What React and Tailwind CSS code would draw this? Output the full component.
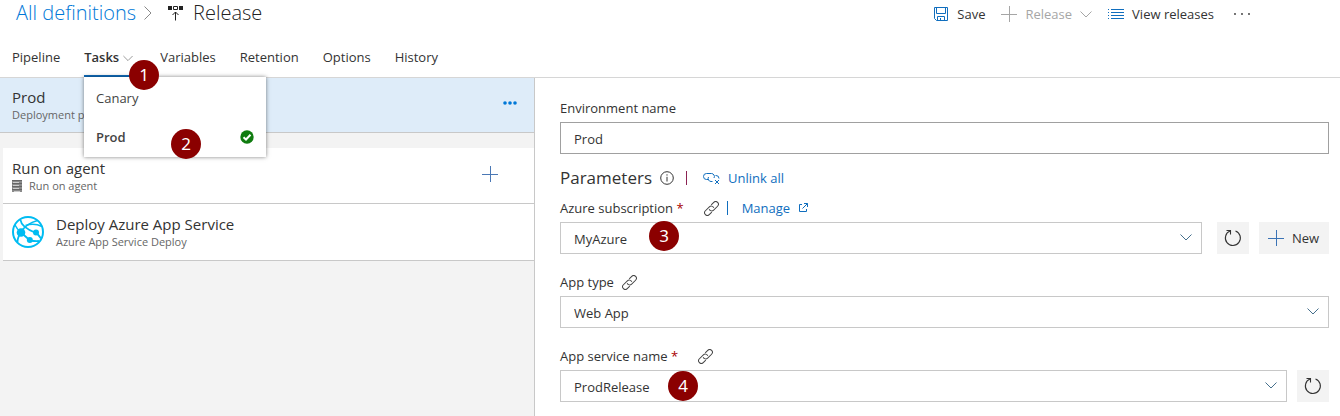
import React from "react";

const stroke = { fill: "none", stroke: "currentColor" };

function Chevron({ className = "" }) {
  return (
    <svg width="12" height="7" viewBox="0 0 12 7" className={className} {...stroke} aria-hidden="true">
      <path d="M0.5 0.5 6 6 11.5 0.5" />
    </svg>
  );
}

function Plus({ className = "" }) {
  return (
    <svg width="16" height="16" viewBox="0 0 16 16" className={className} {...stroke} aria-hidden="true">
      <path d="M8.5 0V16M0 8.5H16" />
    </svg>
  );
}

function LinkIcon() {
  return (
    <svg width="15" height="15" viewBox="0 0 15 15" className="shrink-0 text-[#444]" {...stroke} aria-hidden="true">
      <g transform="rotate(-45 7.5 7.5)">
        <path d="M5.200 10.200H1.600a2.700 2.700 0 0 1 0-5.400h5.600a2.700 2.700 0 0 1 2.400 3.800" />
        <path d="M9.800 4.800H13.400a2.700 2.700 0 0 1 0 5.400H7.800a2.700 2.700 0 0 1-2.400-3.800" />
      </g>
    </svg>
  );
}

function UnlinkIcon() {
  return (
    <svg width="17" height="14" viewBox="0 0 17 14" className="shrink-0" {...stroke} aria-hidden="true">
      <path d="M5.500 8.500H3.500a3 3 0 0 1 0-6h5a3 3 0 0 1 2.500 4.500" />
      <path d="M9.500 10.500H8a3 3 0 0 1-2.500-4.500M12.500 4.500h0.500a3 3 0 0 1 3 3" />
      <path d="M12 9l4 4M16 9l-4 4" />
    </svg>
  );
}

function InfoIcon() {
  return (
    <svg width="14" height="14" viewBox="0 0 14 14" className="text-[#333]" {...stroke} aria-hidden="true">
      <circle cx="7" cy="7" r="6.300" />
      <path d="M7 5.800V10.500M7 3.300V4.600" />
    </svg>
  );
}

function ExternalIcon() {
  return (
    <svg width="10" height="10" viewBox="0 0 10 10" {...stroke} aria-hidden="true">
      <path d="M4 1.500H1.500v7h7V6M6 0.500h3.500V4M9.500 0.500L4.500 5.500" />
    </svg>
  );
}

function RefreshIcon() {
  return (
    <svg width="18" height="18" viewBox="0 0 18 18" className="text-[#333]" {...stroke} aria-hidden="true">
      <path d="M11.500 1.900A7.500 7.500 0 1 1 6 2" strokeWidth="1.100" />
      <path d="M2.500 1.500H6.500V5.500" strokeWidth="1.100" />
    </svg>
  );
}

function SaveIcon() {
  return (
    <svg width="14" height="14" viewBox="0 0 14 14" className="text-[#106ebe]" {...stroke} aria-hidden="true">
      <path d="M0.500 0.500H13.500V13.500H2.500L0.500 11.500Z" />
      <path d="M2.500 0.500V6.500H11.500V0.500M3.500 13.500V9.500H10.500V13.500M6.500 11V13.500" />
    </svg>
  );
}

function ListIcon() {
  return (
    <svg width="16" height="12" viewBox="0 0 16 12" className="text-[#106ebe]" {...stroke} aria-hidden="true">
      <path d="M3 1.500H16M3 4.500H16M3 7.500H16M3 10.500H16" />
      <path d="M0 1.500H1M0 4.500H1M0 7.500H1M0 10.500H1" />
    </svg>
  );
}

function ReleaseIcon() {
  return (
    <svg width="15" height="15" viewBox="0 0 15 15" className="text-[#222]" aria-hidden="true">
      <path fill="currentColor" d="M0 0h4v4H0zM11 0h4v4h-4z" />
      <path {...stroke} d="M5.500 0.500h4v3h-4zM7.500 6V14.500M4.500 9l3-3 3 3" />
    </svg>
  );
}

function ServerIcon() {
  return (
    <svg width="10" height="12" viewBox="0 0 10 12" aria-hidden="true">
      <path fill="#8a8a8a" d="M0 0h10v12H0z" />
      <path stroke="#666" d="M0 0.500h10M0 3.500h10M0 6.500h10M0 9.500h10" />
      <path stroke="#ccc" d="M1 2.500h6M1 5.500h6M1 8.500h6M2 11.500h6" />
    </svg>
  );
}

function AzureIcon() {
  return (
    <svg width="32" height="32" viewBox="0 0 32 32" className="shrink-0" fill="none" stroke="#00bcf2" aria-hidden="true">
      <circle cx="16" cy="16" r="15" strokeWidth="2" />
      <path strokeWidth="1.800" d="M8.500 16.500C12 11 18 6.500 25.500 4.500M8.500 4C9 9 15 13.500 24 17M9 16.500L17.500 24M9 16C6.500 20 5.500 23 5.500 26M24 16.500C26.500 19 28 21 29 22.500M18 24.500C21 25 24 25.500 27 25" />
      <path strokeWidth="1.500" d="M13.500 9.500C19 7.500 25 8 30 10.500M3 9C4.500 12 6 14 8.500 16" />
      <g fill="#00bcf2" stroke="none">
        <circle cx="9" cy="16.500" r="4.300" />
        <circle cx="24" cy="16.500" r="3" />
        <circle cx="17.800" cy="24" r="3" />
      </g>
    </svg>
  );
}

function Dots({ className, gap, r }) {
  const w = gap * 2 + r * 2;
  return (
    <svg width={w} height={r * 2} className={className} fill="currentColor" aria-hidden="true">
      {[0, 1, 2].map((i) => (
        <circle key={i} cx={r + i * gap} cy={r} r={r * 0.9} />
      ))}
    </svg>
  );
}

function Marker({ n, className }) {
  return (
    <span className={`absolute z-20 flex size-[30px] items-center justify-center rounded-full bg-[#8b0000] font-['Noto_Sans',sans-serif] text-[17px] leading-[30px] text-white ${className}`}>
      {n}
    </span>
  );
}

function Select({ id, value, children }) {
  return (
    <div className="relative min-w-0 flex-1">
      <select id={id} defaultValue={value} className="block h-8 w-full appearance-none border border-[#c8c8c8] bg-white px-[13px] pt-0.5 outline-none">
        <option>{value}</option>
      </select>
      <Chevron className="pointer-events-none absolute top-3 right-2.5 text-[#456f8c]" />
      {children}
    </div>
  );
}

function Refresh() {
  return (
    <button type="button" aria-label="Refresh" className="flex size-8 shrink-0 items-center justify-center bg-[#f3f3f3]">
      <RefreshIcon />
    </button>
  );
}

export default function App() {
  return (
    <div className="flex min-h-screen flex-col bg-white font-['Open_Sans',sans-serif] text-[13px] leading-5 text-[#333]">
      <header className="border-b border-[#d6d6d6]">
        <div className="flex h-[38px] items-start justify-between pr-[90px] pl-4">
          <h1 className="flex h-[26px] items-center text-[20px] font-light">
            <a href="#definitions" className="text-[#0078d7]">All definitions</a>
            <svg width="8" height="14" viewBox="0 0 8 14" className="mr-2.5 ml-2 text-[#888]" {...stroke} aria-hidden="true">
              <path d="M0.500 0.500L7 7 0.500 13.500" />
            </svg>
            <span className="mr-2.5 ml-1.5"><ReleaseIcon /></span>
            <span className="text-[#222]">Release</span>
          </h1>
          <div className="flex h-7 items-center">
            <button className="flex items-center gap-[9px]"><SaveIcon />Save</button>
            <button disabled className="ml-4 flex items-center gap-2 text-[#a6a6a6]"><Plus />Release<Chevron /></button>
            <button className="ml-4 flex items-center gap-2"><ListIcon />View releases</button>
            <button aria-label="More actions" className="ml-5"><Dots gap={7} r={1} /></button>
          </div>
        </div>
        <nav className="relative flex h-[39px] gap-6 pl-3">
          <a href="#pipeline" className="pt-[9px]">Pipeline</a>
          <button aria-haspopup="menu" aria-expanded="true" className="flex w-[52px] items-start gap-1 border-b-2 border-[#106ebe] pt-[9px] font-semibold">
            Tasks
            <Chevron className="mt-2 w-2.5 shrink-0 text-[#888]" />
          </button>
          <a href="#variables" className="pt-[9px]">Variables</a>
          <a href="#retention" className="pt-[9px]">Retention</a>
          <a href="#options" className="pt-[9px]">Options</a>
          <a href="#history" className="pt-[9px]">History</a>
          <div role="menu" className="absolute top-[39px] left-[84px] z-10 w-[182px] bg-white text-[#444] shadow-[0_0_4px_rgba(0,0,0,0.5)]">
            <button role="menuitem" className="flex h-10 w-full items-center px-3 pt-0.5">Canary</button>
            <button role="menuitem" className="flex h-10 w-full items-center justify-between px-3 font-semibold">
              Prod
              <svg width="14" height="14" viewBox="0 0 14 14" aria-hidden="true">
                <circle cx="7" cy="7" r="6.700" fill="#107c10" />
                <path d="M3.500 7.200L6 9.500 10.500 4.800" fill="none" stroke="#fff" strokeWidth="2" />
              </svg>
            </button>
            <Marker n="2" className="top-[52px] left-[87px]" />
          </div>
          <Marker n="1" className="top-[22px] left-[129px]" />
        </nav>
      </header>

      <main className="flex flex-1">
        <aside className="w-2/5 max-w-[535px] shrink-0 border-r border-[#c8c8c8] bg-[#f3f3f3]">
          <section className="flex h-[55px] items-center justify-between border-b border-[#c8c8c8] bg-[#deecf9] pr-[17px] pl-3">
            <div>
              <h2 className="text-[15px] leading-5">Prod</h2>
              <p className="text-[11px] leading-4 text-[#666]">Deployment process</p>
            </div>
            <button aria-label="Stage actions" className="pb-1 text-[#0078d7]"><Dots gap={5} r={2} /></button>
          </section>
          <div className="mt-[15px] ml-[3px] bg-white">
            <section className="flex h-14 items-center justify-between border-b border-[#c8c8c8] pr-9 pl-[9px]">
              <div>
                <h2 className="text-[15px] leading-5">Run on agent</h2>
                <p className="flex items-center gap-[7px] text-[11px] leading-4 text-[#666]"><ServerIcon />Run on agent</p>
              </div>
              <button aria-label="Add task" className="pb-1 text-[#4a78b5]"><Plus /></button>
            </section>
            <section className="flex h-[57px] items-center gap-3 border-b border-[#c8c8c8] pl-[9px]">
              <AzureIcon />
              <div>
                <h2 className="text-[15px] leading-5">Deploy Azure App Service</h2>
                <p className="text-[11px] leading-4 text-[#666]">Azure App Service Deploy</p>
              </div>
            </section>
          </div>
        </aside>

        <form className="min-w-0 flex-1 pt-5 pr-[11px] pl-[25px]">
          <label htmlFor="env" className="block">Environment name</label>
          <input id="env" defaultValue="Prod" className="mt-1 block h-8 w-full border border-[#a0a0a0] px-[13px] pt-0.5 outline-none" />

          <div className="mt-3 flex h-6 items-center">
            <h2 className="text-[17px] leading-6">Parameters</h2>
            <span className="ml-2"><InfoIcon /></span>
            <span className="ml-3 h-3.5 w-px bg-[#8b2252]" />
            <a href="#unlink" className="ml-4 flex items-center gap-2 text-[#106ebe]"><UnlinkIcon />Unlink all</a>
          </div>

          <div className="mt-2 flex h-5 items-center">
            <label htmlFor="sub">Azure subscription <span className="text-[#a80000]">*</span></label>
            <span className="ml-5"><LinkIcon /></span>
            <span className="ml-2 h-3.5 w-px bg-[#106ebe]" />
            <a href="#manage" className="ml-3.5 flex items-center gap-2 text-[#106ebe]">Manage<ExternalIcon /></a>
          </div>
          <div className="mt-1 flex">
            <Select id="sub" value="MyAzure"><Marker n="3" className="-top-px left-[89px]" /></Select>
            <span className="ml-[15px] flex gap-2.5">
              <Refresh />
              <button type="button" className="flex h-8 w-[70px] items-center gap-2 bg-[#f3f3f3] pl-[9px]"><Plus className="text-[#3b73b5]" />New</button>
            </span>
          </div>

          <div className="mt-[18px] flex h-5 items-center gap-2">
            <label htmlFor="type">App type</label><LinkIcon />
          </div>
          <div className="mt-1 flex"><Select id="type" value="Web App" /></div>

          <div className="mt-[18px] flex h-5 items-center gap-5">
            <label htmlFor="svc">App service name <span className="text-[#a80000]">*</span></label><LinkIcon />
          </div>
          <div className="mt-1 flex gap-2.5">
            <Select id="svc" value="ProdRelease"><Marker n="4" className="top-px left-[108px]" /></Select>
            <Refresh />
          </div>
        </form>
      </main>
    </div>
  );
}
